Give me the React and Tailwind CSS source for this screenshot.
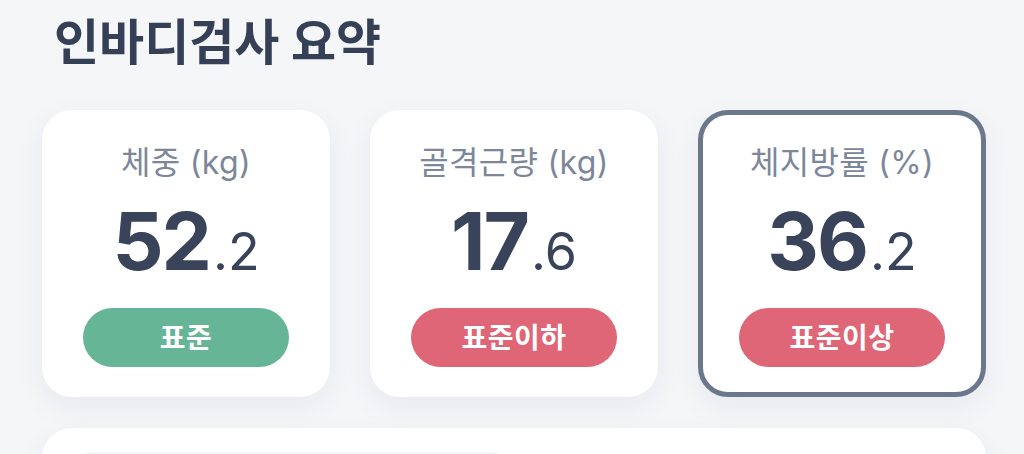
import React from "react";

const font = { fontFamily: '"Inter", "Noto Sans CJK KR", sans-serif' };

function Card({ label, whole, frac, status, tone, selected }) {
  return (
    <div
      className={`flex h-[287px] w-[288px] flex-col items-center rounded-[30px] border-[5px] bg-white pt-[29px] shadow-[0_10px_30px_rgba(30,40,60,0.06)] ${
        selected ? "border-[#6b778a]" : "border-transparent"
      }`}
    >
      <div className="text-[32px] leading-[38px] text-[#7c879a] tracking-[0.3px]">{label}</div>
      <div className="mt-[19px] flex items-baseline leading-none text-[#39435a]">
        <span className="text-[80px] font-bold tracking-[-2px] leading-none">{whole}</span>
        <span className="ml-[3px] text-[52px] font-normal leading-none">.{frac}</span>
      </div>
      <div
        className={`mt-[27px] flex h-[59px] w-[206px] items-center justify-center rounded-full text-[28px] font-bold tracking-[0.5px] text-white ${
          tone === "green" ? "bg-[#66b596]" : "bg-[#df6676]"
        }`}
      >
        {status}
      </div>
    </div>
  );
}

export default function App() {
  return (
    <div className="h-[454px] w-[1024px] overflow-hidden bg-[#f5f6f8]" style={font}>
      <div className="pl-[54px] pt-[13px] text-[49px] font-bold leading-[60px] text-[#353f55]">
        인바디검사 요약
      </div>
      <div className="mt-[37px] flex gap-[40px] pl-[42px] pr-[38px]">
        <Card label="체중 (kg)" whole="52" frac="2" status="표준" tone="green" />
        <Card label="골격근량 (kg)" whole="17" frac="6" status="표준이하" tone="red" />
        <Card label="체지방률 (%)" whole="36" frac="2" status="표준이상" tone="red" selected />
      </div>
      <div className="ml-[42px] mr-[38px] mt-[31px] h-[120px] rounded-[30px] bg-white px-[38px] pt-[24px] shadow-[0_10px_30px_rgba(30,40,60,0.06)]">
        <div className="h-[40px] w-[425px] rounded-[12px] bg-[#f4f5f8]" />
      </div>
    </div>
  );
}
